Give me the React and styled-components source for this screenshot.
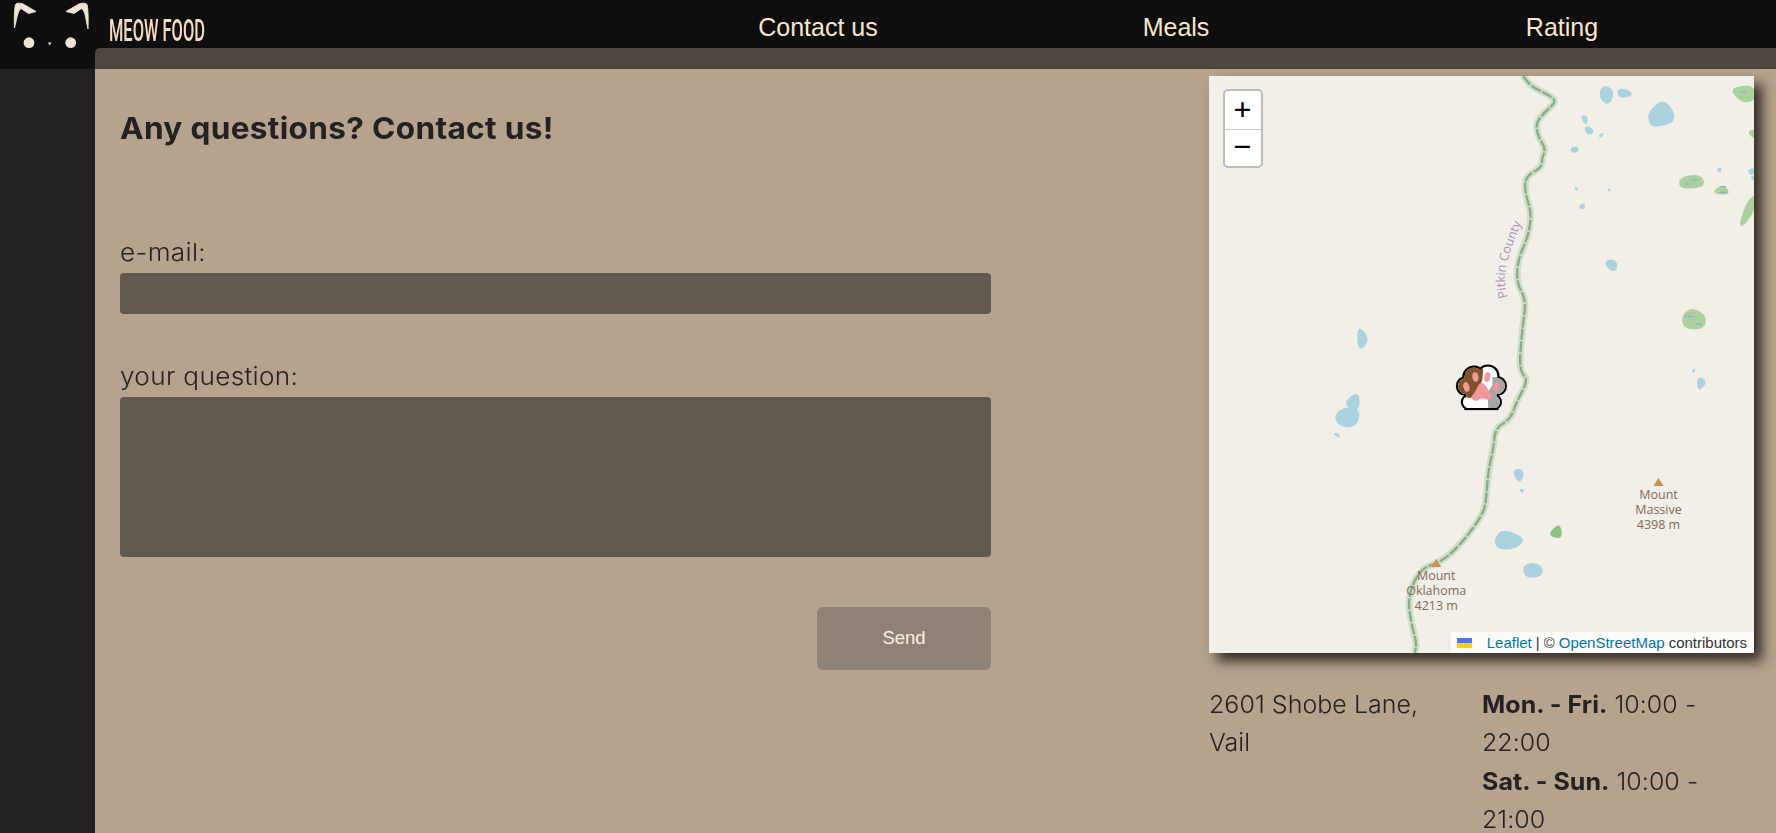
import React from "react";
import styled, { createGlobalStyle } from "styled-components";

const Global = createGlobalStyle`
  html, body { margin: 0; height: 833px; overflow: hidden; background: #232122; }
  * { box-sizing: border-box; }
`;

const TEXT = `Inter, "Open Sans", sans-serif`;

const Shell = styled.div`
  display: grid;
  grid-template-columns: 95px 1fr;
  height: 833px;
  overflow: hidden;
`;
const Rail = styled.aside`
  display: flex;
  flex-direction: column;
  background: #232122;
`;
const LogoBox = styled.div`
  height: 69px;
  background: #0e0e0e;
`;
const Column = styled.div`
  display: flex;
  flex-direction: column;
  min-width: 0;
  background: #0e0e0e;
`;
const TopBar = styled.header`
  height: 48px;
  display: grid;
  grid-template-columns: 537px 372px 344px 1fr;
  align-items: center;
`;
const Brand = styled.div`
  align-self: start;
  padding: 9px 0 0 14px;
  font: 500 31px/44px Roboto, sans-serif;
  color: #f5dcc0;
  transform: scaleX(0.53);
  transform-origin: 14px 50%;
  white-space: nowrap;
`;
const NavLink = styled.a`
  justify-self: center;
  font: 400 25px/32px "Liberation Sans", Arial, sans-serif;
  color: #fbe6cb;
`;
const Strip = styled.div`
  height: 21px;
  background: #4f473f;
  border-top-left-radius: 5px;
`;
const Main = styled.main`
  flex: 1;
  display: flex;
  justify-content: space-between;
  padding: 7px 22px 0 25px;
  background: #b5a38d;
  min-height: 0;
`;
const FormPane = styled.form`
  width: 871px;
  display: flex;
  flex-direction: column;
  align-items: stretch;
`;
const Heading = styled.h1`
  margin: 32px 0 0;
  height: 40px;
  font: 700 30px/40px ${TEXT};
  letter-spacing: 0.3px;
  color: #232122;
  transform: scaleX(1.053);
  transform-origin: 0 50%;
`;
const Label = styled.label`
  display: block;
  margin-top: ${(p) => p.$gap}px;
  height: 36px;
  font: 300 24px/32px ${TEXT};
  letter-spacing: 0.3px;
  color: #232122;
  transform: scaleX(1.09);
  transform-origin: 0 50%;
`;
const Input = styled.input`
  display: block;
  width: 100%;
  height: 41px;
  border: 0;
  border-radius: 4px;
  background: #625950;
`;
const Question = styled.textarea`
  display: block;
  width: 100%;
  height: 160px;
  border: 0;
  border-radius: 4px;
  background: #625950;
  resize: none;
`;
const Send = styled.button`
  align-self: flex-end;
  width: 174px;
  height: 63px;
  margin-top: 50px;
  padding-bottom: 2px;
  border: 0;
  border-radius: 6px;
  background: #8e8276;
  color: #fbf0e2;
  font: 400 18.5px "Liberation Sans", Arial, sans-serif;
`;
const InfoPane = styled.section`
  width: 545px;
  flex: none;
`;
const MapFrame = styled.div`
  position: relative;
  width: 545px;
  height: 577px;
  background: #f2efe9;
  box-shadow: 8px 8px 12px rgba(35, 30, 25, 0.9);
`;
const MapArt = styled.svg`
  display: block;
  width: 100%;
  height: 100%;
`;
const Zoom = styled.div`
  position: absolute;
  left: 13.5px;
  top: 13px;
  width: 40px;
  border: 2.4px solid #bdbbb7;
  border-radius: 5px;
  overflow: hidden;
  background: #fff;
`;
const ZoomBtn = styled.div`
  height: ${(p) => p.$h}px;
  padding-bottom: ${(p) => p.$lift}px;
  display: flex;
  align-items: center;
  justify-content: center;
  font: 400 29px "DejaVu Sans Mono", monospace;
  color: #000;
  & + & { border-top: 1px solid #ccc; }
`;
const Credit = styled.div`
  position: absolute;
  right: 0;
  bottom: 0;
  height: 21px;
  padding: 0 7px 0 6px;
  display: flex;
  align-items: center;
  gap: 4px;
  background: rgba(255, 255, 255, 0.8);
  font: 400 15px "Liberation Sans", Arial, sans-serif;
  color: #333;
  white-space: nowrap;
`;
const Flag = styled.svg`
  width: 15px;
  height: 10px;
  margin-right: 11px;
`;
const CreditLink = styled.a`
  color: #0078a8;
`;
const Details = styled.div`
  display: grid;
  grid-template-columns: 273px 1fr;
  margin-top: 33px;
  font: 300 24px/38.4px ${TEXT};
  letter-spacing: 0.05px;
  color: #232122;
`;
const DetailBlock = styled.div`
  transform: scaleX(1.04);
  transform-origin: 0 50%;
  white-space: nowrap;
`;
const Strong = styled.b`
  font-weight: 700;
`;

const mx = (x) => x / 2.722 - 9;
const my = (y, y0) => y / 3 + y0 - 76;
const toMap = (pts, y0) => pts.map(([x, y]) => [mx(x), my(y, y0)]);
const f = (n) => n.toFixed(1);
const blob = (pts, y0, grow = 1.3) => {
  const raw = toMap(pts, y0);
  const cx = raw.reduce((s, p) => s + p[0], 0) / raw.length;
  const cy = raw.reduce((s, p) => s + p[1], 0) / raw.length;
  const m = raw.map(([x, y]) => [cx + (x - cx) * grow, cy + (y - cy) * grow]);
  const mid = (a, b) => [(a[0] + b[0]) / 2, (a[1] + b[1]) / 2];
  const start = mid(m[m.length - 1], m[0]);
  let d = `M${f(start[0])} ${f(start[1])}`;
  m.forEach((p, i) => {
    const e = mid(p, m[(i + 1) % m.length]);
    d += `Q${f(p[0])} ${f(p[1])} ${f(e[0])} ${f(e[1])}`;
  });
  return `${d}Z`;
};
const ribbon = (m) => {
  const mid = (a, b) => [(a[0] + b[0]) / 2, (a[1] + b[1]) / 2];
  let d = `M${f(m[0][0])} ${f(m[0][1])}`;
  for (let i = 1; i < m.length - 1; i++) {
    const e = mid(m[i], m[i + 1]);
    d += `Q${f(m[i][0])} ${f(m[i][1])} ${f(e[0])} ${f(e[1])}`;
  }
  const l = m[m.length - 1];
  return `${d}L${f(l[0])} ${f(l[1])}`;
};
const poly = (pts, y0) => toMap(pts, y0).map((p) => `${f(p[0])},${f(p[1])}`).join(" ");

const borderA = [[880,48],[895,75],[940,100],[972,122],[945,150],[915,185],[918,225],[942,268],[930,295],[932,320],[885,350],[885,400],[903,460],[893,530],[865,600],[862,670],[888,720],[878,800],[870,900],[875,940],[893,960]];
const borderB = [[860,190],[845,238],[803,265],[800,320],[785,390],[780,460],[775,515],[720,600],[660,665],[600,685],[565,770],[575,850],[590,910],[585,938]];
const border = ribbon([...toMap(borderA, 60), ...toMap(borderB, 340)]);

const lakesTop = [
  [[1090,95],[1105,80],[1124,100],[1112,128],[1095,120]],
  [[1140,88],[1162,90],[1176,105],[1142,113]],
  [[1226,160],[1255,130],[1277,145],[1286,182],[1245,194],[1230,188]],
  [[1036,168],[1056,170],[1050,195]],
  [[1048,205],[1060,200],[1072,216],[1056,223]],
  [[1085,226],[1100,218],[1092,234]],
  [[1010,265],[1026,260],[1030,273],[1014,278]],
  [[1406,328],[1420,323],[1415,339]],
  [[1493,330],[1507,325],[1507,342],[1496,342]],
  [[1498,352],[1507,348],[1507,362]],
  [[1019,382],[1029,384],[1024,393]],
  [[1109,385],[1118,387],[1113,396]],
  [[1033,438],[1045,430],[1047,444],[1036,447]],
  [[1104,608],[1120,600],[1134,611],[1130,630],[1116,628]],
  [[430,800],[460,838],[432,870]],
  [[1338,930],[1349,926],[1344,940]],
];
const lakesLow = [
  [[1354,118],[1368,116],[1376,130],[1358,150]],
  [[398,185],[428,160],[432,205],[408,202]],
  [[374,225],[395,207],[428,213],[424,248],[400,258],[378,247]],
  [[363,282],[377,278],[380,294]],
  [[853,395],[872,388],[880,405],[868,426]],
  [[870,447],[883,449],[876,460]],
  [[808,602],[825,575],[862,588],[874,603],[850,623],[818,622]],
  [[886,676],[916,673],[930,690],[921,708],[888,708]],
];
const forests = [
  [[1446,88],[1495,78],[1510,95],[1507,118],[1478,126]],
  [[1490,215],[1512,208],[1510,238]],
  [[1308,360],[1330,347],[1364,350],[1368,380],[1312,384]],
  [[1400,392],[1425,375],[1441,402],[1408,402]],
  [[1470,490],[1490,425],[1512,410],[1510,445],[1484,490]],
  [[1315,770],[1340,746],[1374,770],[1368,803],[1322,803]],
];
const dashes = [
  [1473,97,1488,97],[1338,360,1360,360],[1318,372,1334,372],[1416,380,1432,380],[1414,397,1436,397],[1320,769,1342,769],[1350,792,1366,792],
];

const Peak = ({ x, y0, y, lines }) => (
  <g>
    <polygon points={poly([[x, y - 14],[x + 14, y + 11],[x - 14, y + 11]], y0)} fill="#d08f55" />
    {lines.map((t, i) => (
      <text key={t} x={mx(x)} y={my(y + 49 + i * 45, y0)} textAnchor="middle" fontFamily="'Open Sans', sans-serif" fontSize="12.5" fill="#846a58">{t}</text>
    ))}
  </g>
);

const PawShape = () => (
  <>
    <circle cx="17.5" cy="12" r="9.5" />
    <circle cx="31.5" cy="11" r="9.5" />
    <circle cx="9.5" cy="21" r="8" />
    <circle cx="40.5" cy="21" r="8" />
    <circle cx="12.5" cy="37" r="6" />
    <circle cx="37.5" cy="37" r="6" />
    <rect x="10" y="18" width="30" height="25" />
  </>
);

const Paw = () => (
  <svg x={mx(766) - 25} y={my(75, 340)} width="50" height="46" viewBox="0 0 50 46" overflow="visible">
    <defs>
      <clipPath id="pawClip"><PawShape /></clipPath>
    </defs>
    <g fill="#000" stroke="#000" strokeWidth="4.2"><PawShape /></g>
    <g clipPath="url(#pawClip)">
      <rect width="50" height="46" fill="#fff" />
      <polygon points="0,0 27,0 26,14 22,28 14,33 0,31" fill="#80512a" />
      <polygon points="50,12 36,12 36,20 31,28 32,46 50,46" fill="#a6a6a6" />
      <path d="M24.5 18 C28 17 30 23 34 27 C37 31 35 35 31 34.5 C27 33 24 33 21.5 35.5 C17 37 14 33.5 16 30 C20 27 21 19 24.5 18Z" fill="#f2979b" />
      <ellipse cx="10" cy="22" rx="3" ry="4.8" fill="#f2979b" transform="rotate(-15 10 22)" />
      <ellipse cx="19" cy="12" rx="3" ry="4.8" fill="#f2979b" transform="rotate(-8 19 12)" />
      <ellipse cx="31" cy="12" rx="3" ry="4.8" fill="#f2979b" transform="rotate(10 31 12)" />
      <ellipse cx="40" cy="22" rx="3" ry="4.8" fill="#f2979b" transform="rotate(20 40 22)" />
    </g>
  </svg>
);

const OsmMap = () => (
  <MapArt viewBox="0 0 545 577">
    <defs>
      <filter id="soft" x="-5%" y="-5%" width="110%" height="110%"><feGaussianBlur stdDeviation="0.6" /></filter>
      <path id="pitkin" d={`M${mx(838)} ${my(712, 60)} C${mx(815)} ${my(630, 60)} ${mx(850)} ${my(560, 60)} ${mx(878)} ${my(480, 60)}`} />
    </defs>
    <g stroke="#efece6" strokeWidth="0.8">
      <line x1={mx(300)} y1="0" x2={mx(300)} y2="577" />
      <line x1={mx(1172)} y1="0" x2={mx(1172)} y2="577" />
    </g>
    <g filter="url(#soft)">
      <path d={border} fill="none" stroke="#d0e0c8" strokeWidth="7" strokeLinejoin="round" />
      <path d={border} fill="none" stroke="#8aab8e" strokeWidth="2.4" strokeLinejoin="round" strokeDasharray="11 1.5" />
      {forests.map((s, i) => <path key={i} d={blob(s, 60, 1.2)} fill="#add19e" />)}
      <path d={blob([[953,578],[978,552],[985,592],[960,590]], 340, 1.2)} fill="#8fc087" />
      {dashes.map(([a, b, c, d], i) => <line key={i} x1={mx(a)} y1={my(b, 60)} x2={mx(c)} y2={my(d, 60)} stroke="#6db4df" strokeWidth="1" />)}
      {lakesTop.map((l, i) => <path key={i} d={blob(l, 60)} fill="#aad3df" />)}
      {lakesLow.map((l, i) => <path key={i} d={blob(l, 340)} fill="#aad3df" />)}
    </g>
    <text fontFamily="'Open Sans', sans-serif" fontSize="12.5" fill="#ad8fb5">
      <textPath href="#pitkin">Pitkin County</textPath>
    </text>
    <Peak x={643} y0={340} y={670} lines={["Mount", "Oklahoma", "4213 m"]} />
    <Peak x={1248} y0={340} y={427} lines={["Mount", "Massive", "4398 m"]} />
    <Paw />
  </MapArt>
);

const LogoArt = () => (
  <svg width="95" height="69" viewBox="0 0 95 69">
    <g fill="#efe3d3" stroke="#efe3d3" strokeWidth="0.9" strokeLinejoin="round">
      <path d="M14.5 28 C14 18 14.5 8 15.5 4.5 C17 2.5 20 3 23 4 L36 11.5 L28.5 13.5 L21 8.5 C19 9.5 18 13 17 17 Z" />
      <path d="M88 29 C88.5 18 88 8 87 4.5 C85 2.5 82 3 79 4 L66 11.5 L74 13.5 L81.5 8.5 C83.5 9.5 85 13 85.5 17 Z" />
    </g>
    <g fill="#efe3d3">
      <circle cx="29" cy="42.7" r="5.4" />
      <circle cx="70.7" cy="42.7" r="5.4" />
      <polygon points="48,42.5 51.5,42.5 49.7,45.5" />
    </g>
  </svg>
);

export default function App() {
  return (
    <>
      <Global />
      <Shell>
        <Rail>
          <LogoBox><LogoArt /></LogoBox>
        </Rail>
        <Column>
          <TopBar>
            <Brand>MEOW FOOD</Brand>
            <NavLink>Contact us</NavLink>
            <NavLink>Meals</NavLink>
            <NavLink>Rating</NavLink>
          </TopBar>
          <Strip />
          <Main>
            <FormPane>
              <Heading>Any questions? Contact us!</Heading>
              <Label $gap={89}>e-mail:</Label>
              <Input />
              <Label $gap={47}>your question:</Label>
              <Question />
              <Send type="button">Send</Send>
            </FormPane>
            <InfoPane>
              <MapFrame>
                <OsmMap />
                <Zoom>
                  <ZoomBtn $h={38} $lift={2}>+</ZoomBtn>
                  <ZoomBtn $h={37} $lift={4}>−</ZoomBtn>
                </Zoom>
                <Credit>
                  <Flag viewBox="0 0 15 10"><rect width="15" height="5" fill="#4c7be1" /><rect y="5" width="15" height="5" fill="#ffd500" /></Flag>
                  <CreditLink>Leaflet</CreditLink>|<span>©</span><CreditLink>OpenStreetMap</CreditLink><span>contributors</span>
                </Credit>
              </MapFrame>
              <Details>
                <DetailBlock>2601 Shobe Lane,<br />Vail</DetailBlock>
                <DetailBlock>
                  <Strong>Mon. - Fri.</Strong> 10:00 -<br />22:00<br />
                  <Strong>Sat. - Sun.</Strong> 10:00 -<br />21:00
                </DetailBlock>
              </Details>
            </InfoPane>
          </Main>
        </Column>
      </Shell>
    </>
  );
}
